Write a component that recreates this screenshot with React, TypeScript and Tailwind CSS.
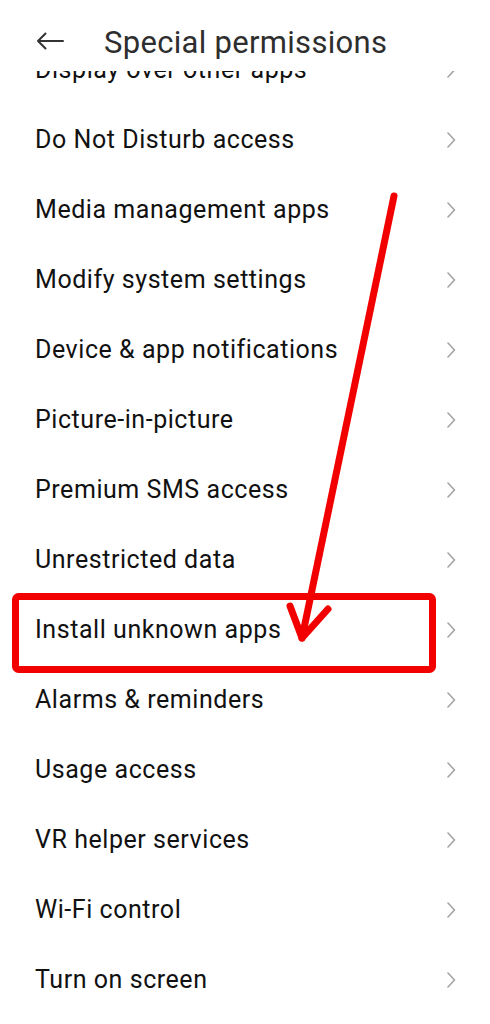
import React from "react";

const items = [
  "Display over other apps",
  "Do Not Disturb access",
  "Media management apps",
  "Modify system settings",
  "Device & app notifications",
  "Picture-in-picture",
  "Premium SMS access",
  "Unrestricted data",
  "Install unknown apps",
  "Alarms & reminders",
  "Usage access",
  "VR helper services",
  "Wi-Fi control",
  "Turn on screen",
];

function Chevron() {
  return (
    <svg width="12" height="16" viewBox="0 0 12 16" className="shrink-0">
      <path d="M3 1 L9.5 8 L3 15" fill="none" stroke="#a3a3a3" strokeWidth="1.6" strokeLinecap="round" strokeLinejoin="round" />
    </svg>
  );
}

function Row({ label }: { label: string }) {
  return (
    <div className="h-[70px] flex items-center justify-between pl-[35px] pr-[33px]">
      <span className="text-[25px] text-[#111] tracking-[0.55px] whitespace-nowrap">{label}</span>
      <Chevron />
    </div>
  );
}

export default function App() {
  return (
    <div
      className="relative w-[490px] h-[1024px] bg-white overflow-hidden flex flex-col"
      style={{ fontFamily: "Roboto, 'Noto Sans', sans-serif" }}
    >
      {/* top bar */}
      <div className="relative z-10 h-[71px] shrink-0 bg-white flex items-center pt-[13px] pl-[36px]">
        <svg width="28" height="18" viewBox="0 0 28 18" className="shrink-0 -mt-[2px]">
          <path d="M27 9 H2 M9.5 1.5 L2 9 L9.5 16.5" fill="none" stroke="#333" strokeWidth="2" strokeLinecap="round" strokeLinejoin="round" />
        </svg>
        <h1 className="ml-[40px] text-[31px] text-[#2e2e2e] tracking-[0.3px] leading-none whitespace-nowrap">
          Special permissions
        </h1>
      </div>

      {/* scrolled list */}
      <div className="flex-1 overflow-hidden">
        <div className="-mt-[36px]">
          {items.map((it) => (
            <Row key={it} label={it} />
          ))}
        </div>
      </div>

      {/* red markup drawn over the list */}
      <svg className="absolute inset-0 z-20 pointer-events-none" width="490" height="1024" viewBox="0 0 490 1024">
        <rect x="15.5" y="596.5" width="417" height="73" rx="3" fill="none" stroke="#f20000" strokeWidth="7" />
        <path d="M394 196 L302 638" fill="none" stroke="#f20000" strokeWidth="7" strokeLinecap="round" />
        <path d="M290 606 L302 638 L328 609" fill="none" stroke="#f20000" strokeWidth="7" strokeLinecap="round" strokeLinejoin="round" />
      </svg>
    </div>
  );
}
